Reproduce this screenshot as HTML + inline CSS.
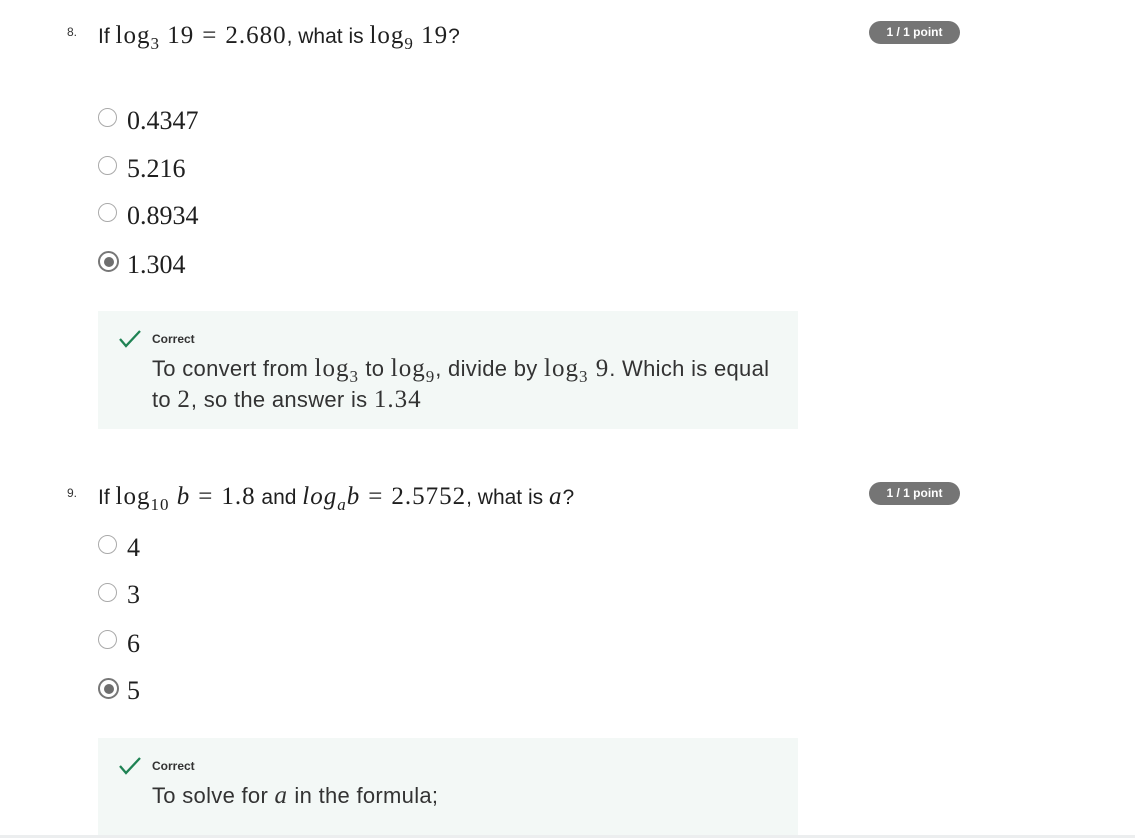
<!DOCTYPE html>
<html><head><meta charset="utf-8"><style>
body{margin:0;width:1135px;height:838px;background:#fff;position:relative;overflow:hidden;font-family:"Liberation Sans",sans-serif;color:#1f1f1f}
.a{position:absolute;white-space:nowrap}
.m{font-family:"Liberation Serif",serif;font-size:25px;letter-spacing:1px}
.e{margin:0 8px}
.sub{font-size:17px;position:relative;top:6px}
.q{font-size:21px;line-height:28px}
.num{font-size:12px;color:#333}
.badge{position:absolute;left:869px;width:91px;height:23px;border-radius:12px;background:#757575;color:#fff;font-size:12px;font-weight:bold;text-align:center;line-height:23px}
.r{position:absolute;left:98px;width:17px;height:17px;border:1.5px solid #aaa;border-radius:50%;background:#fff}
.r.s{border:2px solid #777}
.r.s::after{content:"";position:absolute;left:3.5px;top:3.5px;width:10px;height:10px;border-radius:50%;background:#6e6e6e}
.o{position:absolute;left:127px;font-family:"Liberation Serif",serif;font-size:26px;line-height:28px}
.fb{position:absolute;left:98px;width:700px;background:#f3f8f6}
.cor{position:absolute;left:152px;font-size:12px;font-weight:bold;color:#333}
.fbt{position:absolute;left:152px;font-size:22px;line-height:31px;color:#333;white-space:nowrap;letter-spacing:0.3px}
</style></head><body>
<div class="a num" style="left:67px;top:25px">8.</div>
<div class="a q" style="left:98px;top:22px">If <span class="m">log<span class="sub">3</span> 19<span class="e">=</span>2.680</span>, what is <span class="m">log<span class="sub">9</span> 19</span>?</div>
<div class="badge" style="top:21px">1 / 1 point</div>

<div class="r" style="top:108px"></div><div class="o" style="top:107px">0.4347</div>
<div class="r" style="top:156px"></div><div class="o" style="top:155px">5.216</div>
<div class="r" style="top:203px"></div><div class="o" style="top:202px">0.8934</div>
<div class="r s" style="top:251px"></div><div class="o" style="top:251px">1.304</div>

<div class="fb" style="top:311px;height:118px"></div>
<svg class="a" style="left:118px;top:329px" width="24" height="20" viewBox="0 0 24 20"><path d="M2 10 L8 17 L22 2" fill="none" stroke="#1f8354" stroke-width="2.3"/></svg>
<div class="cor" style="top:332px">Correct</div>
<div class="fbt" style="top:353px">To convert from <span class="m">log<span class="sub">3</span></span> to <span class="m">log<span class="sub">9</span></span>, divide by <span class="m">log<span class="sub">3</span> 9</span>. Which is equal</div>
<div class="fbt" style="top:384px">to <span class="m">2</span>, so the answer is <span class="m">1.34</span></div>

<div class="a num" style="left:67px;top:486px">9.</div>
<div class="a q" style="left:98px;top:483px">If <span class="m">log<span class="sub">10</span> <i>b</i><span class="e">=</span>1.8</span> and <span class="m"><i>log<span class="sub">a</span>b</i><span class="e">=</span>2.5752</span>, what is <span class="m"><i>a</i></span>?</div>
<div class="badge" style="top:482px">1 / 1 point</div>

<div class="r" style="top:535px"></div><div class="o" style="top:534px">4</div>
<div class="r" style="top:583px"></div><div class="o" style="top:581px">3</div>
<div class="r" style="top:630px"></div><div class="o" style="top:630px">6</div>
<div class="r s" style="top:678px"></div><div class="o" style="top:677px">5</div>

<div class="fb" style="top:738px;height:97px"></div>
<svg class="a" style="left:118px;top:756px" width="24" height="20" viewBox="0 0 24 20"><path d="M2 10 L8 17 L22 2" fill="none" stroke="#1f8354" stroke-width="2.3"/></svg>
<div class="cor" style="top:759px">Correct</div>
<div class="fbt" style="top:780px">To solve for <span class="m"><i>a</i></span> in the formula;</div>
<div class="a" style="left:0;top:835px;width:1135px;height:3px;background:#eceeef"></div>
</body></html>
